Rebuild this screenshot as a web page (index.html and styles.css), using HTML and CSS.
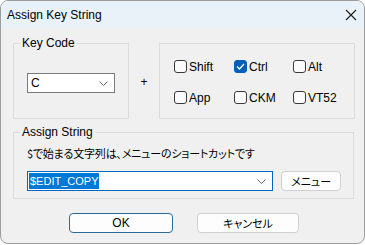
FILE: index.html
```html
<!DOCTYPE html>
<html lang="ja">
<head>
<meta charset="utf-8">
<title>Assign Key String</title>
<link rel="stylesheet" href="styles.css">
</head>
<body>
<div class="window">
  <div class="titlebar">
    <span class="title">Assign Key String</span>
    <svg class="close" width="12" height="12" viewBox="0 0 12 12"><path d="M1 1 L11 11 M11 1 L1 11" stroke="#1a1a1a" stroke-width="1.1" fill="none"/></svg>
  </div>
  <div class="content">
    <div class="top-row">
      <fieldset class="group keycode">
        <legend>Key Code</legend>
        <div class="combo combo-key">
          <span class="combo-text">C</span>
          <svg class="chev" width="9" height="5" viewBox="0 0 9 5"><path d="M0.5 0.5 L4.5 4.5 L8.5 0.5" stroke="#6a6a6a" stroke-width="1" fill="none"/></svg>
        </div>
      </fieldset>
      <div class="plus">+</div>
      <div class="group mods">
        <label class="chk"><span class="box"></span><span>Shift</span></label>
        <label class="chk"><span class="box checked"><svg width="9" height="7" viewBox="0 0 9 7"><path d="M1 3.5 L3.5 6 L8 1" stroke="#fff" stroke-width="1.3" fill="none"/></svg></span><span>Ctrl</span></label>
        <label class="chk"><span class="box"></span><span>Alt</span></label>
        <label class="chk"><span class="box"></span><span>App</span></label>
        <label class="chk"><span class="box"></span><span>CKM</span></label>
        <label class="chk"><span class="box"></span><span>VT52</span></label>
      </div>
    </div>
    <fieldset class="group assign">
      <legend>Assign String</legend>
      <div class="hint">$で始まる文字列は、メニューのショートカットです</div>
      <div class="assign-row">
        <div class="combo combo-assign">
          <span class="sel">$EDIT_COPY</span>
          <svg class="chev" width="9" height="5" viewBox="0 0 9 5"><path d="M0.5 0.5 L4.5 4.5 L8.5 0.5" stroke="#6a6a6a" stroke-width="1" fill="none"/></svg>
        </div>
        <button class="btn btn-menu">メニュー</button>
      </div>
    </fieldset>
    <div class="buttons">
      <button class="btn btn-ok">OK</button>
      <button class="btn btn-cancel">キャンセル</button>
    </div>
  </div>
</div>
</body>
</html>
```

FILE: styles.css
```css
html, body {
  margin: 0;
  padding: 0;
  background: #ffffff;
}
body {
  font-family: "Liberation Sans", "Noto Sans CJK JP", sans-serif;
  font-size: 12px;
  color: #000;
}
.window {
  box-sizing: border-box;
  width: 365px;
  height: 244px;
  border: 1px solid #9c9c9c;
  border-radius: 8px;
  overflow: hidden;
  background: #f0f0f0;
}
.titlebar {
  height: 27px;
  background: #eaf2f9;
  display: flex;
  align-items: center;
  justify-content: space-between;
  padding: 0 6px 0 6px;
}
.title {
  font-size: 12px;
  line-height: 14px;
}
.close {
  margin-right: 1px;
}
.content {
  padding: 8px 0 0 12px;
}
.top-row {
  display: flex;
  align-items: flex-start;
}
.group {
  border: 1px solid #dcdcdc;
  margin: 0;
  min-width: 0;
}
fieldset.group {
  padding: 0;
}
legend {
  line-height: 14px;
  padding: 0 2px;
  margin-left: -7px;
}
.keycode {
  width: 116px;
  box-sizing: border-box;
  padding: 23px 13px 25px 13px !important;
}
.combo {
  box-sizing: border-box;
  height: 20px;
  background: #fff;
  border: 1px solid #7a7a7a;
  display: flex;
  align-items: center;
  justify-content: space-between;
  padding: 0 6px 0 2px;
}
.combo-text {
  padding-left: 1px;
}
.plus {
  width: 30px;
  text-align: center;
  margin-top: 39px;
  line-height: 14px;
}
.mods {
  box-sizing: border-box;
  width: 196px;
  height: 76px;
  margin-top: 7px;
  padding: 16px 0 0 14px;
  display: grid;
  grid-template-columns: 60px 59px 60px;
  grid-auto-rows: 13px;
  row-gap: 18px;
}
.chk {
  display: flex;
  align-items: center;
  gap: 2px;
  line-height: 14px;
}
.box {
  box-sizing: border-box;
  width: 13px;
  height: 13px;
  border: 1px solid #3a3a3a;
  border-radius: 3px;
  background: #fbfbfb;
  display: flex;
  align-items: center;
  justify-content: center;
}
.box.checked {
  background: #005fb8;
  border-color: #005fb8;
}
.assign {
  width: 341px;
  box-sizing: border-box;
  margin-top: 6px !important;
  padding: 7px 12px 7px 13px !important;
}
.hint {
  font-family: "Noto Sans CJK JP", sans-serif;
  font-feature-settings: "palt";
  font-size: 11px;
  line-height: 14px;
  letter-spacing: -0.2px;
}
.assign-row {
  margin-top: 11px;
  display: flex;
  gap: 8px;
}
.combo-assign {
  width: 247px;
  border-color: #0067c0;
  padding-left: 1px;
}
.sel {
  background: #0078d7;
  color: #fff;
  font-size: 11px;
  line-height: 16px;
  padding: 0 1px;
}
.btn {
  box-sizing: border-box;
  font-family: "Noto Sans CJK JP", "Liberation Sans", sans-serif;
  font-feature-settings: "palt";
  font-size: 11px;
  line-height: 14px;
  background: #fdfdfd;
  border: 1px solid #d0d0d0;
  border-radius: 4px;
  padding: 0;
  color: #000;
  height: 20px;
}
.btn-menu {
  width: 60px;
}
.buttons {
  display: flex;
  gap: 24px;
  margin-top: 14px;
  margin-left: 56px;
}
.btn-ok {
  width: 104px;
  border-color: #2d6a99;
  font-family: "Liberation Sans", sans-serif;
  font-size: 12px;
}
.btn-cancel {
  width: 102px;
}
```
